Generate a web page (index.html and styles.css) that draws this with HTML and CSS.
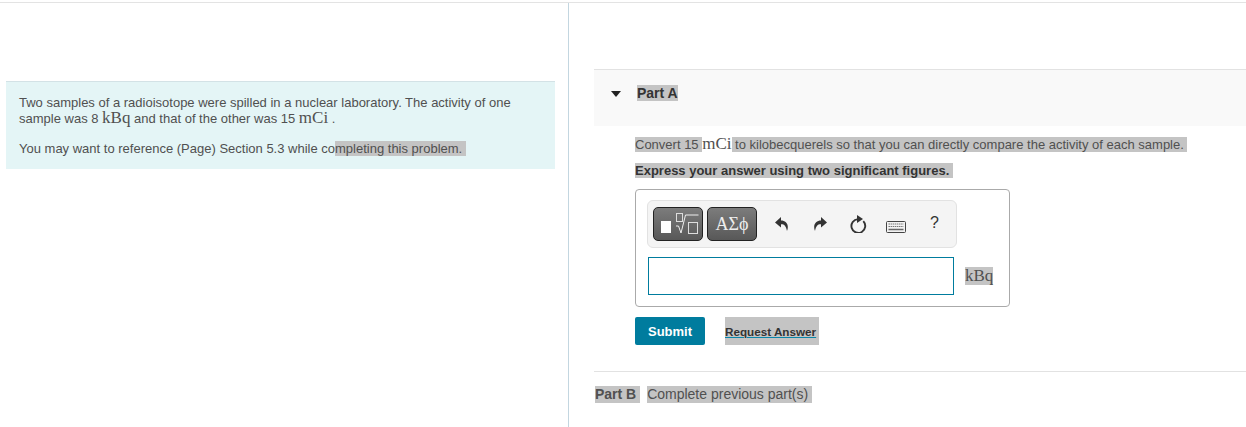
FILE: index.html
```html
<!DOCTYPE html>
<html lang="en">
<head>
<meta charset="utf-8">
<title>Radioisotope problem</title>
<link rel="stylesheet" href="styles.css">
</head>
<body>
<div class="page">
  <aside class="intro">
    <div class="intro-card">
      <p class="intro-text">Two samples of a radioisotope were spilled in a nuclear laboratory. The activity of one sample was 8 <span class="math">kBq</span> and that of the other was 15 <span class="math">mCi</span> .</p>
      <p class="intro-ref">You may want to reference (Page) Section 5.3 while co<span class="hl">mpleting this problem.&nbsp;</span></p>
    </div>
  </aside>
  <main class="parts">
    <section class="part-a">
      <header class="part-head">
        <svg class="caret" viewBox="0 0 10 6" width="10" height="6"><path d="M0 0h10L5 6z"/></svg>
        <h2 class="part-title"><span class="hl">Part A</span></h2>
      </header>
      <div class="part-body">
        <p class="question"><span class="hl">Convert 15 </span><span class="math math-q">mCi</span><span class="hl"> to kilobecquerels so that you can directly compare the activity of each sample.&nbsp;</span></p>
        <p class="instruction"><span class="hl">Express your answer using two significant figures.&nbsp;</span></p>
        <div class="answer-box">
          <div class="toolbar">
            <button class="tpl-btn" type="button" aria-label="Templates">
              <svg viewBox="0 0 48 32" width="48" height="32">
                <rect x="7" y="13" width="10" height="12" fill="#fff"/>
                <rect x="22.500" y="5.500" width="6" height="8" fill="none" stroke="#ddd"/>
                <path d="M22 18h2.500l2.500 7 4.500-18h13" fill="none" stroke="#eee"/>
                <rect x="34.500" y="14.500" width="9" height="11" fill="none" stroke="#ddd"/>
              </svg>
            </button>
            <button class="tpl-btn tpl-greek" type="button">ΑΣϕ</button>
            <div class="tools">
              <svg class="tool-undo" viewBox="0 0 14 14" width="14" height="14"><path d="M6 0 0 5.500 6 10.500V7.200C9 7 11 8.500 12 14 14.500 7.500 11 3.500 6 3.500z" fill="#333"/></svg>
              <svg class="tool-redo" viewBox="0 0 14 14" width="14" height="14"><path d="M8 0 14 5.500 8 10.500V7.200C5 7 3 8.500 2 14-.5 7.500 3 3.500 8 3.500z" fill="#333"/></svg>
              <svg class="tool-reset" viewBox="0 0 17 18" width="17" height="18"><path d="M13.300 6.200A6.900 6.900 0 1 1 8 4.100" fill="none" stroke="#333" stroke-width="1.900"/><path d="M7 0 13 4 7 8z" fill="#333"/></svg>
              <svg class="tool-keys" viewBox="0 0 20 12" width="20" height="12"><rect x=".5" y=".5" width="19" height="11" rx="1" fill="#f2f2f2" stroke="#444"/><path d="M2.500 3h15M2.500 5.500h15" stroke="#777" stroke-dasharray="1.500 .6"/><path d="M2.500 8.500h15" stroke="#666" stroke-width="1.500"/></svg>
              <span class="help">?</span>
            </div>
          </div>
          <div class="answer-row">
            <input class="answer-input" type="text" aria-label="Answer">
            <span class="unit math">kBq</span>
          </div>
        </div>
        <div class="actions">
          <button class="submit" type="button">Submit</button>
          <span class="request"><a href="#">Request Answer</a></span>
        </div>
      </div>
    </section>
    <section class="part-b">
      <strong class="hl">Part B&nbsp;</strong>
      <span class="hl">Complete previous part(s)&nbsp;</span>
    </section>
  </main>
</div>
</body>
</html>
```
FILE: styles.css
```css
* { box-sizing: border-box; }
html, body { margin: 0; height: 100%; }
body {
  font-family: "Liberation Sans", Arial, sans-serif;
  font-size: 13px;
  color: #505050;
  background: #fff;
  overflow: hidden;
}
p { margin: 0; }
.page {
  display: grid;
  grid-template-columns: 569px 1fr;
  height: 427px;
  margin-top: 2px;
  border-top: 1px solid #e3e3e3;
}
.hl { background: #c4c4c4; }
.math { font-family: "Liberation Serif", serif; font-size: 17px; }
.intro {
  border-right: 1px solid #c3d6e0;
  padding: 78px 13px 0 6px;
}
.intro-card {
  height: 88px;
  background: #e4f5f6;
  border-top: 1px solid #d3e2e6;
  padding: 13px 13px 0;
}
.intro-text { line-height: 15px; }
.intro-text .math { line-height: 15px; }
.intro-ref { margin-top: 15px; line-height: 16px; }
.parts { padding: 66px 0 0 25px; }
.part-a { border-top: 1px solid #e2e2e2; }
.part-head {
  height: 56px;
  background: #f9f9f9;
  display: flex;
  align-items: flex-start;
  padding: 15px 0 0 17px;
  gap: 16px;
}
.caret { margin-top: 6px; fill: #222; flex: none; }
.part-title { margin: 0; font-size: 14px; font-weight: bold; line-height: 17px; color: #333; }
.part-body { padding: 9px 0 0 41px; }
.question { line-height: 17px; height: 20px; }
.math-q { line-height: 17px; }
.instruction { font-weight: bold; line-height: 17px; margin-top: 7px; color: #333; }
.answer-box {
  width: 375px;
  height: 118px;
  margin-top: 10px;
  border: 1px solid #aaa;
  border-radius: 4px;
  padding: 10px 11px;
}
.toolbar {
  width: 310px;
  height: 48px;
  display: flex;
  align-items: center;
  gap: 4px;
  background: #f4f4f4;
  border: 1px solid #e2e2e2;
  border-radius: 6px;
  padding: 0 5px;
}
.tpl-btn {
  width: 50px;
  height: 34px;
  padding: 0;
  border: 1px solid #222;
  border-radius: 5px;
  background: linear-gradient(#7c7c7c, #585858);
  color: #eee;
  display: flex;
  align-items: center;
  justify-content: center;
}
.tpl-greek { font-family: "Liberation Serif", serif; font-size: 18px; }
.tools { display: flex; align-items: center; margin-left: 14px; }
.tool-undo { flex: none; }
.tool-redo { flex: none; margin-left: 24px; }
.tool-reset { flex: none; margin-left: 23px; }
.tool-keys { flex: none; margin-left: 19px; margin-top: 6px; }
.help { margin-left: 24px; font-size: 16px; color: #333; margin-top: -2px; }
.answer-row { display: flex; align-items: center; margin-top: 9px; padding-left: 1px; gap: 11px; }
.answer-input {
  width: 306px;
  height: 38px;
  border: 1px solid #007c9e;
  background: #fff;
  padding: 0;
}
.unit { background: #c4c4c4; line-height: 18px; }
.actions { display: flex; align-items: center; gap: 20px; margin-top: 10px; }
.submit {
  width: 70px;
  height: 28px;
  padding: 0;
  border: 0;
  border-radius: 2px;
  background: #007c9e;
  color: #fff;
  font: bold 13px "Liberation Sans", Arial, sans-serif;
}
.request { background: #c4c4c4; height: 28px; width: 94px; display: flex; align-items: center; }
.request a { color: #333; font-weight: bold; font-size: 11.700px; text-decoration: underline; text-decoration-color: #0a85a8; text-underline-offset: 1px; line-height: 13px; }
.part-b {
  margin-top: 26px;
  border-top: 1px solid #e2e2e2;
  padding: 14px 0 0 1px;
  font-size: 14px;
  line-height: 17px;
  display: flex;
  gap: 7px;
}
```
